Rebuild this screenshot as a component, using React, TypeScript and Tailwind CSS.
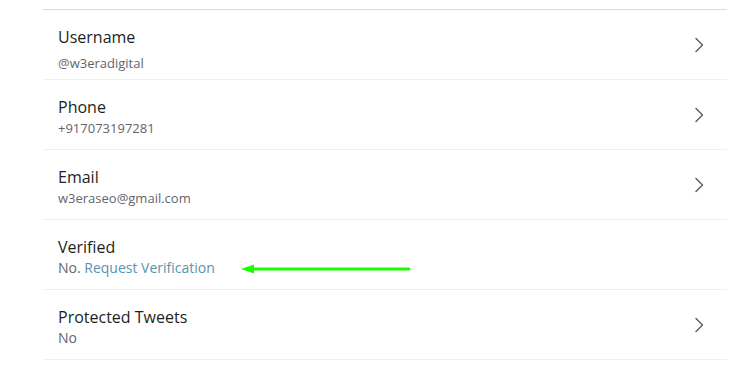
const rows = [
  { title: "Username", sub: "@w3eradigital", chevron: true, gap: "mt-[7px]", size: "text-[13px]" },
  { title: "Phone", sub: "+917073197281", chevron: true, gap: "mt-[2px]", size: "text-[13px]" },
  { title: "Email", sub: "w3eraseo@gmail.com", chevron: true, gap: "mt-[2px]", size: "text-[13px]" },
  { title: "Verified", sub: "", chevron: false, verified: true, gap: "mt-[2px]", size: "text-[14px]" },
  { title: "Protected Tweets", sub: "No", chevron: true, gap: "mt-[2px]", size: "text-[14px]" },
];

const Chevron = () => (
  <svg width="12" height="16" viewBox="0 0 12 16" fill="none">
    <path
      d="M3 1.5 L9.5 8 L3 14.5"
      stroke="#5b6166"
      strokeWidth="1.5"
      strokeLinecap="round"
      strokeLinejoin="round"
    />
  </svg>
);

const App = () => {
  return (
    <div
      className="w-[738px] h-[368px] bg-white pl-[43px] pt-[9px] overflow-hidden"
      style={{ fontFamily: '"Open Sans", "Noto Sans", sans-serif' }}
    >
      <div className="w-[684px] border-t border-[#dcdcdc]">
        {rows.map((r) => (
          <div
            key={r.title}
            className="relative flex h-[70px] border-b border-[#eef0f1] pl-[15px] pr-[22px]"
          >
            <div className="flex flex-1 flex-col pt-[17px]">
              <div className="text-[16px] leading-[20px] text-[#1c1f22]">{r.title}</div>
              <div className={`${r.gap} ${r.size} leading-[18px] text-[#5f666d]`}>
                {r.verified ? (
                  <>
                    No. <span className="text-[#5b93ae]">Request Verification</span>
                  </>
                ) : (
                  r.sub
                )}
              </div>
            </div>
            {r.chevron && (
              <div className="flex items-center">
                <Chevron />
              </div>
            )}
            {r.verified && (
              <svg
                className="absolute left-[198px] top-[43px]"
                width="170"
                height="12"
                viewBox="0 0 170 12"
              >
                <line x1="10" y1="6" x2="168" y2="6" stroke="#1aff00" strokeWidth="3" strokeLinecap="round" />
                <polygon points="0,6 13,1.5 13,10.5" fill="#1aff00" />
              </svg>
            )}
          </div>
        ))}
      </div>
    </div>
  );
};

export default App;
